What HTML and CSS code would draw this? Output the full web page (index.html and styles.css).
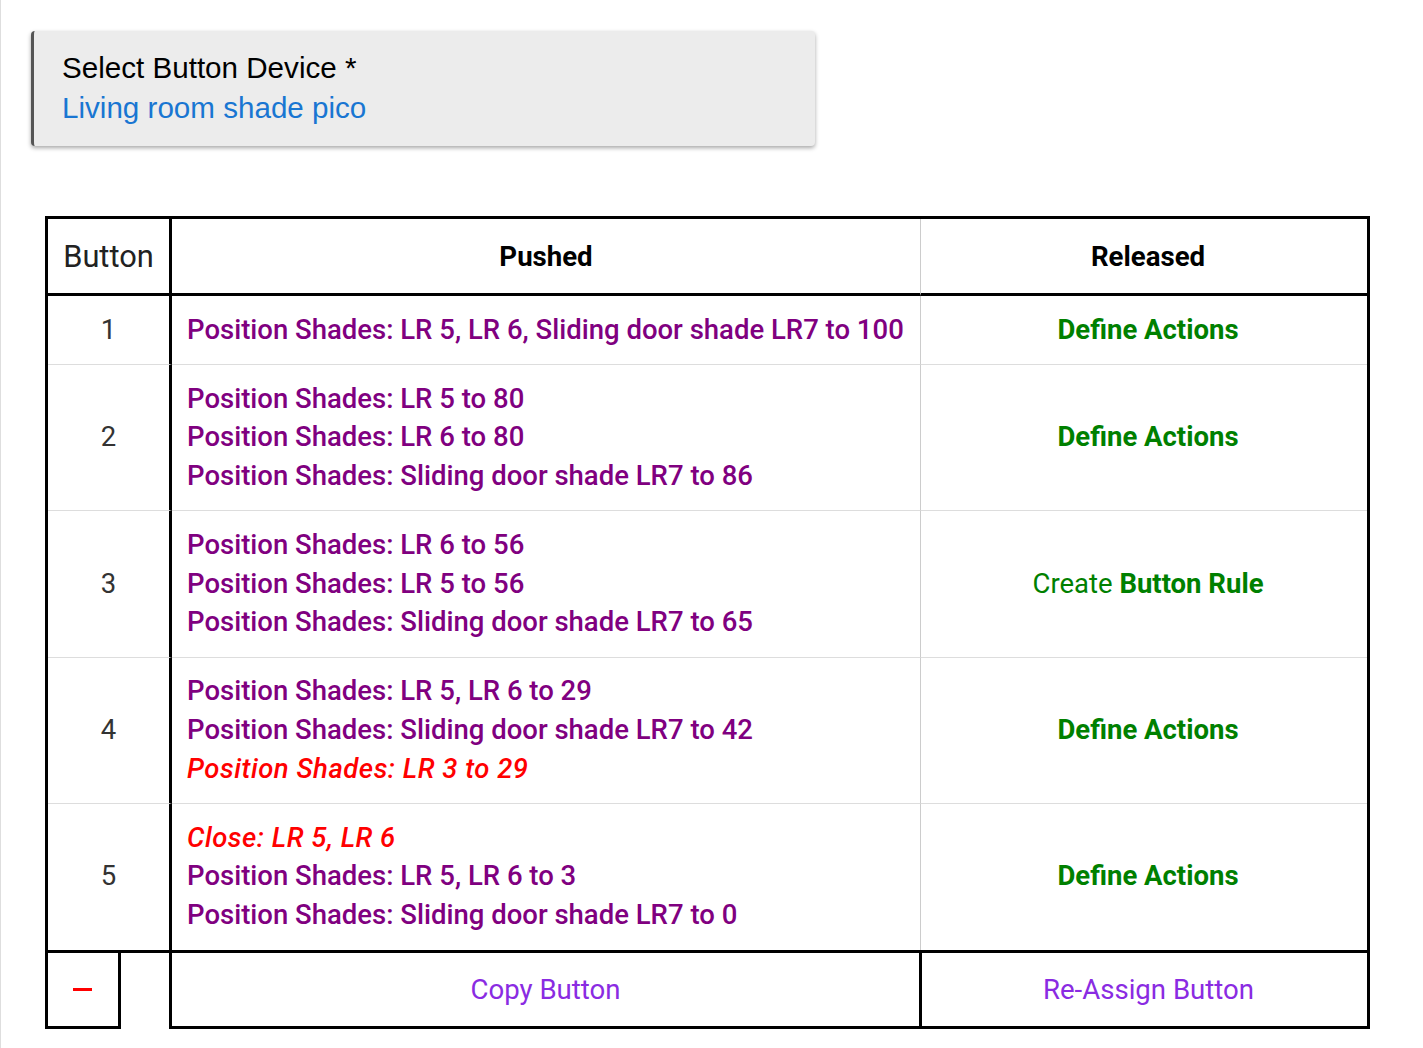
FILE: index.html
```html
<!DOCTYPE html>
<html lang="en">
<head>
<meta charset="utf-8">
<title>Button Device Rules</title>
<link rel="stylesheet" href="styles.css">
</head>
<body>
<div class="page">
  <div class="device-select">
    <div class="device-label">Select Button Device *</div>
    <div class="device-value">Living room shade pico</div>
  </div>

  <div class="btn-table" role="table">
    <div class="cell head num" role="columnheader">Button</div>
    <div class="cell head pushed" role="columnheader"><b>Pushed</b></div>
    <div class="cell head released" role="columnheader"><b>Released</b></div>

    <div class="cell num">1</div>
    <div class="cell pushed">
      <div class="act">Position Shades: LR 5, LR 6, Sliding door shade LR7 to 100</div>
    </div>
    <div class="cell released"><span class="define">Define Actions</span></div>

    <div class="cell num">2</div>
    <div class="cell pushed">
      <div class="act">Position Shades: LR 5 to 80</div>
      <div class="act">Position Shades: LR 6 to 80</div>
      <div class="act">Position Shades: Sliding door shade LR7 to 86</div>
    </div>
    <div class="cell released"><span class="define">Define Actions</span></div>

    <div class="cell num">3</div>
    <div class="cell pushed">
      <div class="act">Position Shades: LR 6 to 56</div>
      <div class="act">Position Shades: LR 5 to 56</div>
      <div class="act">Position Shades: Sliding door shade LR7 to 65</div>
    </div>
    <div class="cell released"><span class="create">Create <b>Button Rule</b></span></div>

    <div class="cell num">4</div>
    <div class="cell pushed">
      <div class="act">Position Shades: LR 5, LR 6 to 29</div>
      <div class="act">Position Shades: Sliding door shade LR7 to 42</div>
      <div class="act warn">Position Shades: LR 3 to 29</div>
    </div>
    <div class="cell released"><span class="define">Define Actions</span></div>

    <div class="cell num last">5</div>
    <div class="cell pushed last">
      <div class="act warn">Close: LR 5, LR 6</div>
      <div class="act">Position Shades: LR 5, LR 6 to 3</div>
      <div class="act">Position Shades: Sliding door shade LR7 to 0</div>
    </div>
    <div class="cell released last"><span class="define">Define Actions</span></div>
  </div>

  <div class="btn-foot">
    <div class="foot-box remove"><span class="minus" aria-label="remove"></span></div>
    <div class="foot-gap"></div>
    <div class="foot-box copy"><span class="link">Copy Button</span></div>
    <div class="foot-box reassign"><span class="link">Re-Assign Button</span></div>
  </div>
</div>
</body>
</html>
```

FILE: styles.css
```css
* {
  box-sizing: border-box;
}

body {
  margin: 0;
  background: #fff;
  font-family: Roboto, "Liberation Sans", sans-serif;
}

.page {
  min-height: 100vh;
  border-left: 1px solid #dedede;
  padding: 31px 0 0 30px;
}

/* device picker */
.device-select {
  width: 784px;
  background: #ececec;
  border-left: 3px solid #555;
  border-radius: 4px;
  box-shadow: 0 2px 4px rgba(0, 0, 0, 0.35);
  padding: 17px 28px 19px;
  font-family: "Liberation Sans", Arial, sans-serif;
  font-size: 29.6px;
  line-height: 39.5px;
}

.device-label {
  color: #000;
}

.device-value {
  color: #1976d2;
}

/* rules table */
.btn-table {
  margin: 70px 0 0 14px;
  width: 1325px;
  border: 3px solid #000;
  display: grid;
  grid-template-columns: 124px 749px 446px;
}

.cell {
  padding: 14.5px 15px;
  font-size: 27.5px;
  line-height: 38.8px;
  border-bottom: 1px solid #ddd;
}

.cell.last {
  border-bottom: none;
}

.cell.num {
  border-right: 3px solid #000;
  text-align: center;
  color: #333;
  display: flex;
  align-items: center;
  justify-content: center;
}

.cell.pushed {
  border-right: 1px solid #ccc;
}

.cell.released {
  display: flex;
  align-items: center;
  justify-content: center;
  padding-left: 23px;
  padding-right: 15px;
}

.cell.head {
  font-size: 30.8px;
  line-height: 43.2px;
  border-bottom: 3px solid #000;
  padding: 15px;
  text-align: center;
  color: #222;
}

.cell.head.released {
  padding-left: 23px;
}

.cell.head b {
  color: #000;
  font-weight: 700;
  font-size: 27.6px;
}

.act {
  color: #800080;
  font-weight: 500;
}

.act.warn {
  color: #ff0000;
  font-style: italic;
  letter-spacing: 0.5px;
}

.define {
  color: #008000;
  font-weight: 700;
}

.create {
  color: #008000;
  font-weight: 400;
}

.create b {
  font-weight: 700;
}

/* footer buttons */
.btn-foot {
  margin-left: 14px;
  display: flex;
  width: 1325px;
}

.foot-box {
  height: 76px;
  border-bottom: 3px solid #000;
  border-right: 3px solid #000;
  display: flex;
  align-items: center;
  justify-content: center;
  font-size: 27.6px;
}

.foot-box.remove {
  width: 76px;
  border-left: 3px solid #000;
}

.foot-gap {
  width: 48px;
}

.foot-box.copy {
  width: 753px;
  border-left: 3px solid #000;
}

.foot-box.reassign {
  width: 448px;
  padding-left: 8px;
}

.minus {
  display: block;
  width: 19px;
  height: 3px;
  background: #ff0000;
  margin-right: 1px;
}

.link {
  color: #8a2be2;
}
```
